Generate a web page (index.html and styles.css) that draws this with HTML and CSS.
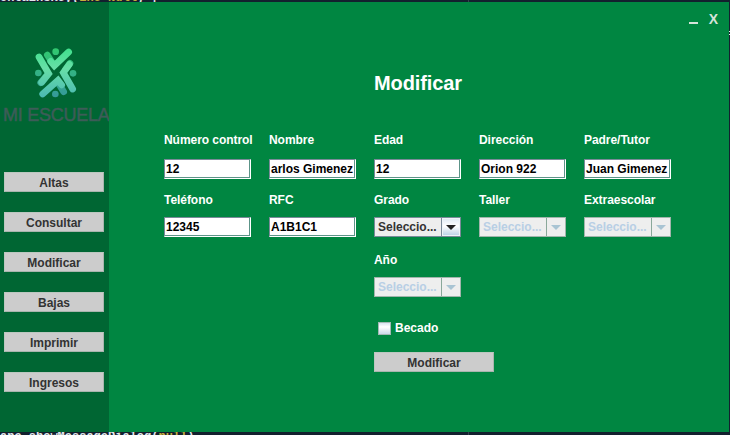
FILE: index.html
```html
<!DOCTYPE html>
<html lang="es">
<head>
<meta charset="utf-8">
<title>Mi Escuela</title>
<link rel="stylesheet" href="styles.css">
</head>
<body>
<div class="code code-top"><pre>ontainsKey(<b>Ene</b> <b>Null</b>) {</pre></div>
<div class="window">
  <aside class="sidebar">
    <svg class="logo" viewBox="0 0 360 249" width="120" height="83">
      <defs>
        <linearGradient id="mint" gradientUnits="userSpaceOnUse" x1="0" y1="40" x2="0" y2="190">
          <stop offset="0" stop-color="#3fe08c"/>
          <stop offset=".4" stop-color="#68dfa7"/>
          <stop offset="1" stop-color="#4ab7b3"/>
        </linearGradient>
        <linearGradient id="deep" gradientUnits="userSpaceOnUse" x1="0" y1="40" x2="0" y2="190">
          <stop offset="0" stop-color="#31c96f"/>
          <stop offset="1" stop-color="#36989b"/>
        </linearGradient>
      </defs>
      <g fill="none" stroke-width="20" stroke-linecap="round">
        <g stroke="url(#deep)">
          <path d="M142 60L156 82"/><path d="M122 143L138 124"/>
          <path d="M210 85L196 104"/><path d="M191 170L178 149"/>
        </g>
        <g stroke="url(#mint)">
          <path d="M206 51L163 92L152 79"/>
          <path d="M117 66L146 116L125 142"/>
          <path d="M128 177L174 136L185 150"/>
          <path d="M208 88L190 113L218 162"/>
        </g>
      </g>
      <g fill="url(#deep)">
        <circle cx="167" cy="50" r="10"/><circle cx="115" cy="114" r="10"/>
        <circle cx="219" cy="115" r="10"/><circle cx="166" cy="177" r="10"/>
      </g>
    </svg>
    <div class="brand">MI ESCUELA</div>
    <nav class="menu">
      <button class="btn">Altas</button>
      <button class="btn">Consultar</button>
      <button class="btn">Modificar</button>
      <button class="btn">Bajas</button>
      <button class="btn">Imprimir</button>
      <button class="btn">Ingresos</button>
    </nav>
  </aside>
  <main class="content">
    <div class="controls"><span class="minimize"></span><span class="close">X</span></div>
    <h1 class="title">Modificar</h1>
    <div class="form">
      <div class="item"><label>Número control</label><div class="field"><span>12</span></div></div>
      <div class="item"><label>Nombre</label><div class="field"><span>arlos Gimenez</span></div></div>
      <div class="item"><label>Edad</label><div class="field"><span>12</span></div></div>
      <div class="item"><label>Dirección</label><div class="field"><span>Orion 922</span></div></div>
      <div class="item"><label>Padre/Tutor</label><div class="field"><span>Juan Gimenez</span></div></div>
      <div class="item"><label>Teléfono</label><div class="field"><span>12345</span></div></div>
      <div class="item"><label>RFC</label><div class="field"><span>A1B1C1</span></div></div>
      <div class="item"><label>Grado</label><div class="combo"><span>Seleccio...</span><i></i></div></div>
      <div class="item"><label>Taller</label><div class="combo off"><span>Seleccio...</span><i></i></div></div>
      <div class="item"><label>Extraescolar</label><div class="combo off"><span>Seleccio...</span><i></i></div></div>
      <div class="item year"><label>Año</label><div class="combo off"><span>Seleccio...</span><i></i></div></div>
    </div>
    <div class="check"><span class="box"></span>Becado</div>
    <button class="btn submit">Modificar</button>
  </main>
  <div class="edge"></div>
</div>
<div class="code code-bottom"><pre>ane.showMessageDialog(<b>null</b>)</pre></div>
</body>
</html>
```
FILE: styles.css
```css
* { box-sizing: border-box; }
body {
  margin: 0;
  width: 730px;
  height: 435px;
  overflow: hidden;
  background: #13202e;
  font: bold 12px/14px "Liberation Sans", Arial, sans-serif;
}
.code {
  display: flex;
  overflow: hidden;
  background: linear-gradient(#34424e, #34424e) 468px 0 / 1px 100% no-repeat;
  color: #e0e5ea;
}
.code pre { margin: 0; font: bold 12px/14px "Liberation Mono", monospace; }
.code b { color: #c5ae3c; }
.code-top { height: 2px; align-items: flex-end; }
.code-top pre { margin-bottom: -3px; }
.code-bottom { height: 3px; align-items: flex-start; }
.code-bottom pre { margin-top: -2px; }
.window { display: flex; width: 730px; height: 430px; }
.edge { width: 1px; height: 6px; margin-top: 29px; background: repeating-linear-gradient(#dfe5e8 0 1px, #13202e 1px 3px); }
.sidebar { width: 109px; height: 430px; background: #006633; overflow: hidden; }
.logo { display: block; width: 120px; height: 83px; margin: 33px 0 -15px; }
.brand {
  height: 22px;
  padding-left: 3px;
  color: #3d5c58;
  font: 18px/24px "Liberation Sans", Arial, sans-serif;
  letter-spacing: -0.25px;
  -webkit-text-stroke: 0.5px #3d5c58;
  white-space: nowrap;
}
.menu { display: grid; gap: 20px; padding: 47px 5px 0 4px; }
.btn {
  display: block;
  width: 100px;
  height: 20px;
  padding: 1px 0 0;
  border: 1px solid;
  border-color: #bcc7c0 #a9b5ae #a9b5ae #bcc7c0;
  background: #ccc;
  color: #333;
  font: inherit;
  text-align: center;
}
.content { width: 620px; background: #008641; }
.controls { display: flex; justify-content: flex-end; height: 68px; padding: 9px 11px 0 0; color: #d5e3d9; }
.minimize { width: 9px; height: 2px; margin: 11px 11px 0 0; background: #d5e3d9; }
.close { font: bold 14px/16px "Liberation Sans", Arial, sans-serif; }
.title { margin: 0 0 0 265px; color: #fff; font: bold 20px/26px "Liberation Sans", Arial, sans-serif; letter-spacing: -0.1px; }
.form { display: grid; grid-template-columns: repeat(5, 87px); grid-template-rows: 58px 60px 46px; column-gap: 18px; margin: 37px 0 0 55px; }
.item label { display: block; height: 14px; color: #fff; white-space: nowrap; letter-spacing: -0.05px; }
.item .field, .item .combo { margin-top: 12px; }
.item:nth-child(n+6) label { margin-top: 2px; }
.item:nth-child(n+6) .field, .item:nth-child(n+6) .combo { margin-top: 10px; }
.year { grid-column: 3; }
.field {
  width: 87px;
  height: 20px;
  padding: 2px 0 0 1px;
  border: 1px solid;
  border-color: #7a8a99 #fff #fff #7a8a99;
  box-shadow: inset -1px -1px #5c9488;
  background: #fff;
  color: #000;
  white-space: nowrap;
}
.combo { display: flex; width: 87px; height: 20px; border: 1px solid #7a8a99; background: #eee; color: #333; }
.combo span { width: 66px; padding: 2px 0 0 3px; }
.combo i { display: flex; flex: 1; align-items: center; justify-content: center; border-left: 1px solid #7a8a99; background: linear-gradient(#dde8f3, #fff 45%, #b8cfe5); box-shadow: inset 0 0 0 1px #eef3f8; }
.combo i::after { content: ""; border: 5px solid transparent; border-top-color: #222; border-bottom: 0; }
.combo.off { border-color: #a2b5ac; color: #b8cfe5; }
.combo.off i { border-color: #8aa89a; background: #eee; box-shadow: none; }
.combo.off i::after { border-top-color: #a9c4d3; }
.check { display: flex; align-items: center; gap: 4px; height: 14px; margin: 24px 0 0 269px; color: #fff; }
.box { width: 13px; height: 13px; border: 1px solid #a5b8b5; background: linear-gradient(#d7e3ef, #fff 35%, #ccdaea); }
.submit { width: 120px; margin: 17px 0 0 265px; }
```
